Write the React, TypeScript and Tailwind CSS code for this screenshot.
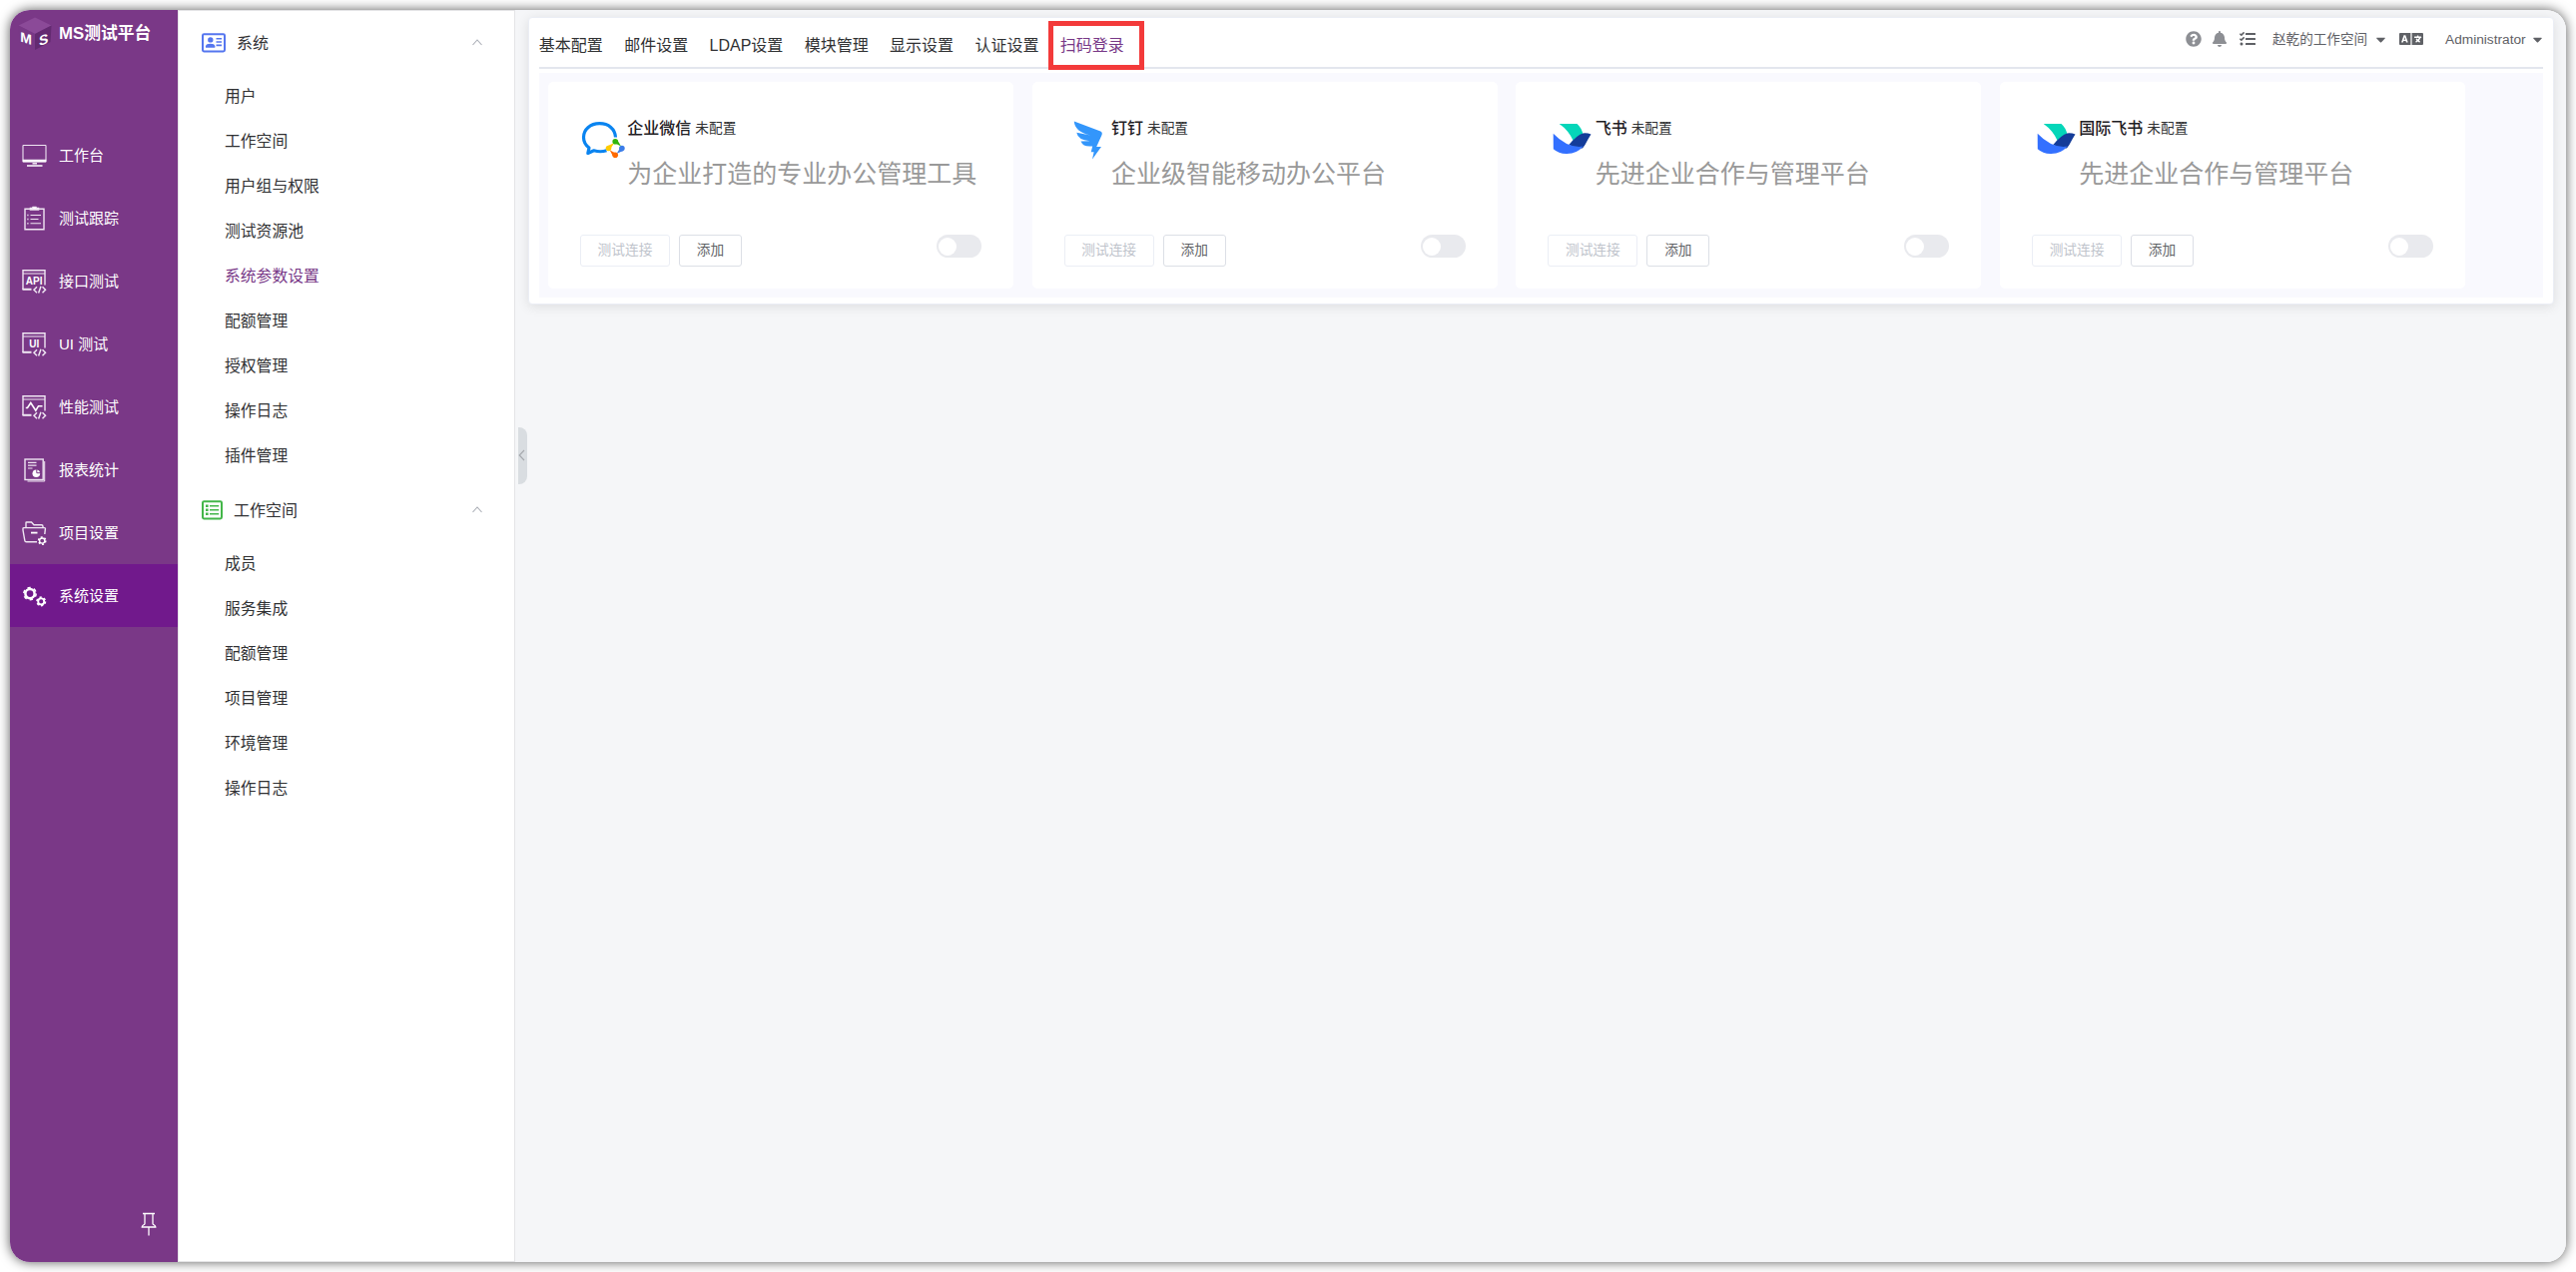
import React from "react";
import { FaBell, FaCaretDown, FaLanguage, FaQuestionCircle, FaTasks } from "react-icons/fa";

type IconProps = { children: React.ReactNode };

function NavIcon({ children }: IconProps) {
  return (
    <svg width="26" height="26" viewBox="0 0 26 26" fill="none" stroke="#efe6f2" strokeWidth="1.4" className="mb-[2px] shrink-0">
      {children}
    </svg>
  );
}

/** Browser window outline with a code mark, shared by the test modules. */
function WindowFrame({ children }: IconProps) {
  return (
    <NavIcon>
      <path d="M24 17.5V2.8H2V22" />
      <path d="M2 6H24" strokeWidth="1" />
      <path d="M1.5 21.8H10.5" strokeWidth="2" />
      <path d="M16 19.3L13 22.3L16 25.3M21.5 19.3L24.5 22.3L21.5 25.3M20 18.8L17.6 25.6" strokeWidth="1.5" />
      {children}
    </NavIcon>
  );
}

function FrameLabel({ text }: { text: string }) {
  return (
    <text
      x="13.2"
      y="16.6"
      textAnchor="middle"
      fill="#fff"
      stroke="none"
      className="font-['Liberation_Sans',sans-serif] text-[10px] font-bold"
    >
      {text}
    </text>
  );
}

function Gear({ x, y, r, w }: { x: number; y: number; r: number; w: number }) {
  const rim = r + w / 2 + 0.3;
  return (
    <g stroke="#fff">
      <circle cx={x} cy={y} r={r} strokeWidth={w} />
      <circle cx={x} cy={y} r={rim} strokeWidth="1.6" strokeDasharray={`${rim * 0.5236} ${rim * 0.5236}`} />
    </g>
  );
}

const nav = [
  {
    label: "工作台",
    icon: (
      <NavIcon>
        <rect x="2" y="3.5" width="23" height="16.5" rx="0.6" strokeWidth="1.1" />
        <path d="M1.8 19H25.2" strokeWidth="2.4" stroke="#fff" />
        <path d="M11.5 21.8H16" strokeWidth="1.6" />
        <path d="M6 24H21.5" strokeWidth="1.5" stroke="#fff" />
      </NavIcon>
    ),
  },
  {
    label: "测试跟踪",
    icon: (
      <NavIcon>
        <path d="M9 4.3H4V24.8H23V4.3H18" />
        <path d="M9.4 5V3.4H11.4L12 2.4H15L15.6 3.4H17.6V5Z" fill="#fff" />
        <path d="M9.5 10.5H20M9.5 14.5H17.5M9.5 18.8H20" strokeWidth="1.1" />
        <path d="M6.3 10.5H7.5M6.3 14.5H7.5M6.3 18.8H7.5" />
      </NavIcon>
    ),
  },
  { label: "接口测试", icon: <WindowFrame><FrameLabel text="API" /></WindowFrame> },
  { label: "UI 测试", icon: <WindowFrame><FrameLabel text="UI" /></WindowFrame> },
  {
    label: "性能测试",
    icon: (
      <WindowFrame>
        <path d="M4.8 14.5H6.5L9.8 9.5L14.8 17.2L17.5 12.7H21.5" stroke="#fff" strokeWidth="1.6" />
      </WindowFrame>
    ),
  },
  {
    label: "报表统计",
    icon: (
      <NavIcon>
        <rect x="4" y="3" width="18.2" height="20.5" />
        <path d="M23.7 5V25H6.5" strokeWidth="1" />
        <path d="M7 6.3H15.5M7 9.2H15.5M7 12H11.5" strokeWidth="1.2" />
        <circle cx="15.3" cy="17.2" r="3.8" fill="#fff" stroke="none" />
        <path d="M15.8 16.7V13.2M15.8 16.7H19.5" stroke="#7a3887" strokeWidth="1" />
      </NavIcon>
    ),
  },
  {
    label: "项目设置",
    icon: (
      <NavIcon>
        <path d="M5 8.6V3.5Q5 3 5.5 3H10.5L13 5.8H20.5Q22 5.8 22 7.3V8.3" />
        <path d="M16 22.8H5.5Q4 22.8 3.8 21.3L2 11V9.3Q2 8.6 3 8.6H23.5Q24.5 8.6 24.4 9.6L23.8 15" />
        <path d="M10 13.6H16.5" strokeWidth="1.8" stroke="#fff" />
        <Gear x={21.2} y={21.6} r={2.6} w={1.3} />
      </NavIcon>
    ),
  },
  {
    label: "系统设置",
    active: true,
    icon: (
      <NavIcon>
        <Gear x={9} y={11.6} r={4.6} w={2.5} />
        <Gear x={20.2} y={19.4} r={3} w={1.9} />
      </NavIcon>
    ),
  },
];

function CubeLogo() {
  return (
    <svg width="34" height="34" viewBox="0 0 34 34" className="shrink-0">
      <path d="M17 0.5L33.5 8.5L17 17L0.5 8.5Z" fill="#8b4a98" />
      <path d="M0.5 8.5L17 17V33L1.5 25Z" fill="#783886" />
      <path d="M33.5 8.5L17 17V33L32.5 25Z" fill="#632a71" />
      <g fill="#fff" className="font-['Liberation_Sans',sans-serif] text-[14px] font-bold">
        <text transform="matrix(1 .3 0 1 2.2 24.4)">M</text>
        <text transform="matrix(1 -.3 0 1 21 29)">S</text>
      </g>
    </svg>
  );
}

function SideNav() {
  return (
    <nav className="flex w-[168px] shrink-0 flex-col bg-[#7a3887] text-white">
      <div className="flex h-[114px] items-start gap-[7px] pl-[8px] pt-[7px]">
        <CubeLogo />
        <span className="whitespace-nowrap pt-[5px] text-[16.8px] font-bold leading-[24px]">MS测试平台</span>
      </div>
      {nav.map((n) => (
        <a
          key={n.label}
          className={`flex h-[63px] items-center gap-[12px] pl-[11px] text-[15px] ${n.active ? "bg-[#71198c]" : ""}`}
        >
          {n.icon}
          <span className="pt-px">{n.label}</span>
        </a>
      ))}
      <div className="mb-[26px] mr-[21px] mt-auto flex justify-end">
        <svg width="16" height="24" viewBox="0 0 16 24" fill="none" stroke="#fff" strokeWidth="1.3">
          <path d="M2 1.5H14M4 2V11.5Q4 12.5 2.5 13Q1.2 13.8 1.2 15H14.8Q14.8 13.8 13.5 13Q12 12.5 12 11.5V2M8 15V23.5" />
        </svg>
      </div>
    </nav>
  );
}

function SystemIcon() {
  return (
    <svg width="24" height="20" viewBox="0 0 24 20" fill="#5576ef">
      <rect x="1" y="1.2" width="22" height="17.2" rx="1.4" fill="none" stroke="#5576ef" strokeWidth="2" />
      <circle cx="8.8" cy="6.9" r="2.7" />
      <path d="M4 14.8V13.2Q4.6 10.8 8.7 10.8Q12.8 10.8 13.3 13.2V14.8Z" />
      <path d="M14.5 5H20V6.5H14.5ZM14.5 8.2H20V9.8H14.5ZM14.5 11.6H20V13.2H14.5Z" />
    </svg>
  );
}

function WorkspaceIcon() {
  return (
    <svg width="21" height="20" viewBox="0 0 21 20" fill="none" stroke="#43b649">
      <rect x="1" y="1.2" width="19" height="17.2" rx="1.4" strokeWidth="2" />
      <path d="M4 5.8H6.6M4 9.8H6.6M4 13.8H6.6" strokeWidth="2.4" />
      <path d="M8 5.8H17.2M8 9.8H17.2M8 13.8H17.2" strokeWidth="1.6" />
    </svg>
  );
}

function MenuGroup({ icon, title, items, first }: { icon: React.ReactNode; title: string; items: string[]; first?: boolean }) {
  return (
    <section>
      <header className={`flex items-center gap-[11px] pl-[23px] pr-[32px] text-[16px] ${first ? "h-[62px]" : "h-[63px] pt-[1px]"}`}>
        {icon}
        <span className="pt-px">{title}</span>
        <svg width="10" height="7" viewBox="0 0 10 7" fill="none" stroke="#aaaeb6" strokeWidth="1.1" className="mb-[2px] ml-auto">
          <path d="M0.5 6L5 1L9.5 6" />
        </svg>
      </header>
      <ul>
        {items.map((t) => (
          <li
            key={t}
            className={`flex h-[45px] items-center pl-[46px] text-[15.8px] ${t === "系统参数设置" ? "text-[#783887]" : ""}`}
          >
            {t}
          </li>
        ))}
      </ul>
    </section>
  );
}

function SettingsMenu() {
  return (
    <aside className="w-[338px] shrink-0 border border-[#e4e4e6] bg-white pt-px text-[#303133]">
      <MenuGroup
        first
        icon={<SystemIcon />}
        title="系统"
        items={["用户", "工作空间", "用户组与权限", "测试资源池", "系统参数设置", "配额管理", "授权管理", "操作日志", "插件管理"]}
      />
      <MenuGroup
        icon={<WorkspaceIcon />}
        title="工作空间"
        items={["成员", "服务集成", "配额管理", "项目管理", "环境管理", "操作日志"]}
      />
    </aside>
  );
}

const tabs = ["基本配置", "邮件设置", "LDAP设置", "模块管理", "显示设置", "认证设置", "扫码登录"];

function TopBar() {
  return (
    <div className="flex h-[51px] justify-between border-b-2 border-[#e3e6ee]">
      <div className="flex gap-[21.35px] pt-[16px] text-[16px] leading-[24px] text-[#303133]">
        {tabs.map((t) =>
          t === "扫码登录" ? (
            <span key={t} className="relative text-[#783887]">
              {t}
              <i className="absolute -left-[12px] -top-[13px] h-[49px] w-[96px] border-5 border-[#f33a3a]" />
            </span>
          ) : (
            <span key={t}>{t}</span>
          ),
        )}
      </div>
      <div className="flex h-[42px] items-center text-[13.6px] text-[#5f6166]">
        <FaQuestionCircle size={16} className="text-[#8d8f94]" />
        <FaBell size={16} className="ml-[10px] text-[#8d8f94]" />
        <FaTasks size={16} className="ml-[12px]" />
        <span className="ml-[17px] w-[96px] whitespace-nowrap pt-[2px]">赵乾的工作空间</span>
        <FaCaretDown size={15} className="ml-[5px]" />
        <FaLanguage size={24} className="ml-[11px]" />
        <span className="ml-[22px] w-[80px] pt-[2px] text-[13.7px]">Administrator</span>
        <FaCaretDown size={15} className="-mr-[2px] ml-[5px]" />
      </div>
    </div>
  );
}

function WeComLogo() {
  return (
    <svg width="44" height="40" viewBox="0 0 44 40">
      <path
        d="M34.5 16.5C34 8 27.5 2.7 18.5 2.7C9 2.7 2.5 8.8 2.5 16.5C2.5 21 4.6 24.5 8 27L6.8 32.5L12.8 29.8C17 31 21.5 31 25.5 29.8"
        fill="none"
        stroke="#0a84f0"
        strokeWidth="3.2"
        strokeLinejoin="round"
      />
      <path d="M34 20L27 27.5L34 35L41 27.5Z" fill="#fff" />
      <path d="M32.2 21.6L36.4 19.2L40 25.6Z" fill="#2fb50a" />
      <path d="M40.3 25.2L42 30L35.5 33Z" fill="#3b7de8" />
      <path d="M36.4 33.6L32 35.6L28.6 29.2Z" fill="#ff6a00" />
      <path d="M28.3 30L26.4 25.2L33.2 22Z" fill="#ffcc00" />
      <circle cx="34.2" cy="20.8" r="2.8" fill="#2fb50a" />
      <circle cx="40.9" cy="27.6" r="2.8" fill="#3b7de8" />
      <circle cx="34.2" cy="34.2" r="2.8" fill="#ff6a00" />
      <circle cx="27.5" cy="27.5" r="2.8" fill="#ffcc00" />
    </svg>
  );
}

function DingTalkLogo() {
  return (
    <svg width="44" height="40" viewBox="0 0 44 40" fill="#3396fb">
      <path d="M8.8 0.4L35.3 10.6Q37.6 11.8 36.4 14.6L31.2 26H36L27 38.6L28.6 31.2H25.7L27.2 25.4Q18 26.6 15.5 20.4L24.5 20.3Q12.5 19.2 11.3 11.8L25 14.6Q9.3 10.6 8.8 0.4Z" />
    </svg>
  );
}

function FeishuLogo() {
  return (
    <svg width="44" height="40" viewBox="-3.5 0 44 40">
      <path d="M7.2 3H25Q29.5 7 31 13.5L21.2 20Q16.5 9.5 7.2 3Z" fill="#05d6b9" />
      <path d="M16.8 24Q25 14 31 12.4Q35.5 12 39 13.6Q36.5 17.5 33 24L30.5 27.5Q24 28 16.8 24Z" fill="#143c99" />
      <path d="M1.2 12.8Q15.5 27.8 31 25.6Q25 33.3 14 33Q6.5 32.8 1.3 28.2Z" fill="#3370ff" />
    </svg>
  );
}

const platforms = [
  { name: "企业微信", desc: "为企业打造的专业办公管理工具", logo: <WeComLogo /> },
  { name: "钉钉", desc: "企业级智能移动办公平台", logo: <DingTalkLogo /> },
  { name: "飞书", desc: "先进企业合作与管理平台", logo: <FeishuLogo /> },
  { name: "国际飞书", desc: "先进企业合作与管理平台", logo: <FeishuLogo /> },
];

function PlatformCard({ name, desc, logo }: (typeof platforms)[number]) {
  return (
    <article className="flex h-[207px] w-[466px] flex-col rounded-[5px] bg-white pl-[32px]">
      <div className="flex">
        <div className="mt-[39px] w-[47.3px] pl-px">{logo}</div>
        <div>
          <div className="mt-[34px] flex items-center gap-[4px] whitespace-nowrap leading-[24px] text-[#303133]">
            <b className="text-[16px] font-medium text-[#1f2024]">{name}</b>
            <span className="pt-px text-[13.7px]">未配置</span>
          </div>
          <p className="mt-[14px] whitespace-nowrap text-[25px] leading-[38px] text-[#999]">{desc}</p>
        </div>
      </div>
      <div className="mt-[42px] flex items-start text-[13.7px]">
        <button className="h-[32px] w-[90px] rounded-[3px] border border-[#ebeef5] text-[#c0c4cc]">测试连接</button>
        <button className="ml-[9px] h-[32px] w-[63px] rounded-[3px] border border-[#dcdfe6] text-[#606266]">添加</button>
        <span className="ml-auto mr-[32px] flex h-[23px] w-[45px] items-center rounded-full bg-[#e9eaee] pl-[2px]">
          <i className="size-[18px] rounded-full bg-white" />
        </span>
      </div>
    </article>
  );
}

export default function App() {
  return (
    <div className="h-[1274px] w-[2580px] overflow-hidden bg-white p-[10px] font-['Liberation_Sans','Noto_Sans_CJK_SC',sans-serif]">
      <div className="flex h-[1254px] w-[2560px] rounded-[20px] shadow-[0_0_12px_rgba(0,0,0,0.65)]">
        <div className="flex w-full overflow-hidden rounded-[20px] bg-[#f5f6f8]">
          <SideNav />
          <SettingsMenu />
          <div className="flex w-[12.8px] shrink-0 items-start pl-[3px] pt-[418px]">
            <div className="flex h-[57px] w-[9px] items-center rounded-r-[8px] bg-[#d9dde1]">
              <svg width="7" height="12" viewBox="0 0 7 12" fill="none" stroke="#a5a8ad" strokeWidth="1.1" className="mb-[2px]">
                <path d="M6 1L1.2 6L6 11" />
              </svg>
            </div>
          </div>
          <main className="mr-[12px] mt-[7px] h-[288px] flex-1 rounded-[4px] border border-[#ebeef5] bg-white pl-[10px] pr-[10px] shadow-[0_2px_12px_rgba(0,0,0,0.1)]">
            <TopBar />
            <div className="mt-[4px] flex h-[225px] gap-[18.7px] bg-[#f9f9fe] pl-[9.2px] pt-[9px]">
              {platforms.map((p) => (
                <PlatformCard key={p.name} {...p} />
              ))}
            </div>
          </main>
        </div>
      </div>
    </div>
  );
}
